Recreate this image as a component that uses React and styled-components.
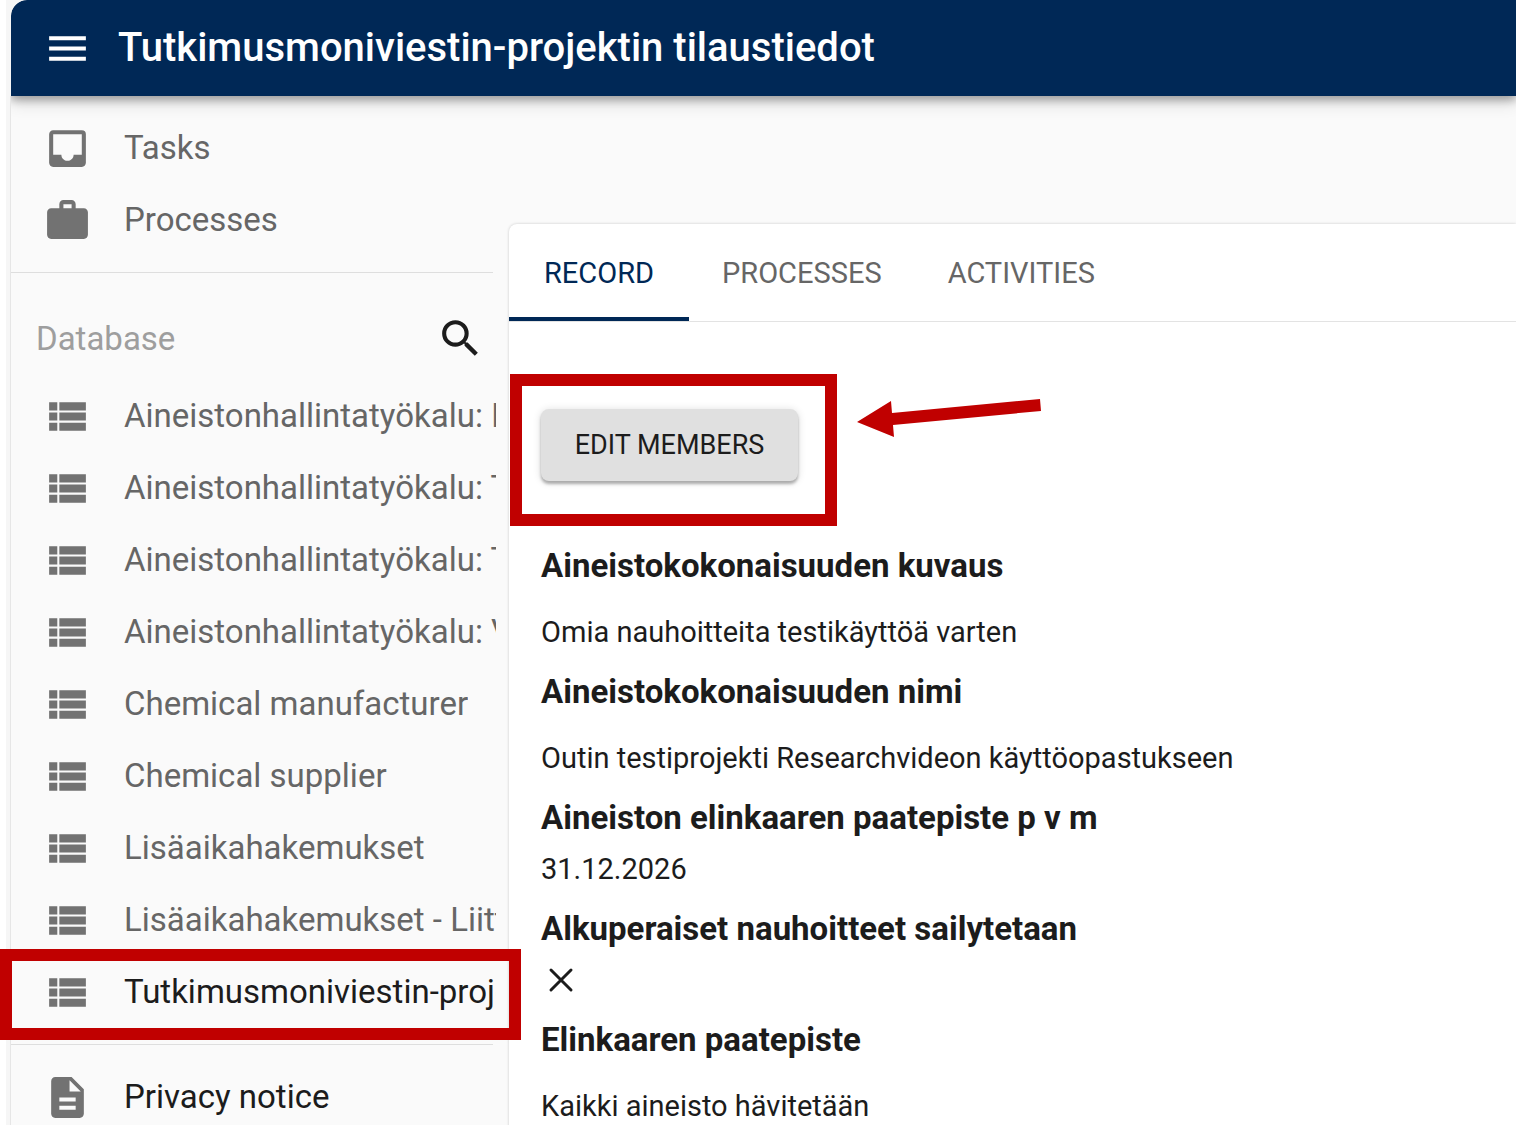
import React from 'react'
import styled, { createGlobalStyle } from 'styled-components'
import { MdMenu, MdInbox, MdWork, MdSearch, MdDescription } from 'react-icons/md'

const databases = [
  'Aineistonhallintatyökalu: IT',
  'Aineistonhallintatyökalu: Tila',
  'Aineistonhallintatyökalu: Tuki',
  'Aineistonhallintatyökalu: Vuo',
  'Chemical manufacturer',
  'Chemical supplier',
  'Lisäaikahakemukset',
  'Lisäaikahakemukset - Liitteet',
  'Tutkimusmoniviestin-projektin'
]

const tabs = ['Record', 'Processes', 'Activities']

const fields = [
  { name: 'Aineistokokonaisuuden kuvaus', value: 'Omia nauhoitteita testikäyttöä varten', rich: true },
  { name: 'Aineistokokonaisuuden nimi', value: 'Outin testiprojekti Researchvideon käyttöopastukseen', rich: true },
  { name: 'Aineiston elinkaaren paatepiste p v m', value: '31.12.2026' },
  { name: 'Alkuperaiset nauhoitteet sailytetaan', value: false },
  { name: 'Elinkaaren paatepiste', value: 'Kaikki aineisto hävitetään', rich: true }
]

function ListIcon() {
  return (
    <svg viewBox="0 0 24 24" fill="currentColor" aria-hidden="true">
      <path d="M3 14h4v-4H3v4zm0 5h4v-4H3v4zM3 9h4V5H3v4zm5 5h13v-4H8v4zm0 5h13v-4H8v4zM8 5v4h13V5H8z" />
    </svg>
  )
}

function CrossIcon() {
  return (
    <svg width="40" height="40" viewBox="0 0 40 40" role="img" aria-label="No">
      <path d="M10 10L30 30M30 10L10 30" stroke="#1c1c1c" strokeWidth="3" strokeLinecap="round" />
    </svg>
  )
}

function App() {
  const [tab, setTab] = React.useState('Record')
  return (
    <Page>
      <GlobalStyle />
      <Frame>
        <Header>
          <IconButton type="button" aria-label="Menu"><MdMenu /></IconButton>
          <Title>Tutkimusmoniviestin-projektin tilaustiedot</Title>
        </Header>
        <Body>
          <Sidebar>
            <NavList>
              <NavItem><NavLink href="#tasks"><MdInbox /><span>Tasks</span></NavLink></NavItem>
              <NavItem><NavLink href="#processes"><MdWork /><span>Processes</span></NavLink></NavItem>
            </NavList>
            <Divider />
            <Subheader>
              <span>Database</span>
              <IconButton type="button" aria-label="Search"><MdSearch /></IconButton>
            </Subheader>
            <DatabaseList>
              {databases.map((name, i) => {
                const current = i === databases.length - 1
                return (
                  <NavItem key={name}>
                    <NavLink href={'#db' + i} $dark={current}><ListIcon /><span>{name}</span></NavLink>
                    {current && <NavMark />}
                  </NavItem>
                )
              })}
            </DatabaseList>
            <Divider />
            <NavList>
              <NavItem><NavLink href="#privacy" $dark><MdDescription /><span>Privacy notice</span></NavLink></NavItem>
            </NavList>
          </Sidebar>
          <Card>
            <Tabs role="tablist">
              {tabs.map((name) => (
                <Tab key={name} type="button" role="tab" aria-selected={tab === name} $active={tab === name} onClick={() => setTab(name)}>
                  {name}
                </Tab>
              ))}
            </Tabs>
            <Record>
              <Actions>
                <EditButton type="button">Edit members</EditButton>
                <ButtonMark />
                <Arrow viewBox="0 0 186 40" aria-hidden="true">
                  <path d="M0 24L34 3L35 15L183 1L184 13L36 27L37 39Z" fill="#c00000" />
                </Arrow>
              </Actions>
              {fields.map((field) => (
                <Field key={field.name}>
                  <h2>{field.name}</h2>
                  <Value $rich={field.rich}>{field.value === false ? <CrossIcon /> : field.value}</Value>
                </Field>
              ))}
            </Record>
          </Card>
        </Body>
      </Frame>
    </Page>
  )
}

export default App

const GlobalStyle = createGlobalStyle`
  * {
    box-sizing: border-box;
  }
  body {
    margin: 0;
    background: #fff;
    font-family: Roboto, "Liberation Sans", sans-serif;
    color: #1c1c1c;
  }
  button {
    font-family: inherit;
    border: 0;
    padding: 0;
    cursor: pointer;
  }
`

const Page = styled.div`
   height: 100vh;
   padding-left: 6px;
   overflow: hidden;
`

const Frame = styled.div`
   display: flex;
   flex-direction: column;
   height: 100%;
   padding-left: 5px;
   background: #f6f6f6;
`

const Header = styled.header`
   position: relative;
   z-index: 3;
   display: flex;
   flex-shrink: 0;
   align-items: center;
   gap: 26px;
   height: 96px;
   padding: 0 32px;
   background: #002856;
   color: #fff;
   border-top-left-radius: 16px;
   box-shadow: 0 4px 8px rgba(0, 0, 0, 0.3), 0 8px 16px rgba(0, 0, 0, 0.12);
   clip-path: inset(0 0 -32px 0 round 16px 0 0 0);
`

const Title = styled.h1`
   margin: 0;
   font-size: 40px;
   line-height: 48px;
   font-weight: 500;
   white-space: nowrap;
`

const IconButton = styled.button`
   display: flex;
   background: none;
   color: inherit;
  svg {
    width: 49px;
    height: 49px;
  }
`

const Body = styled.div`
   display: grid;
   grid-template-columns: 485px 1fr;
   gap: 13px;
   flex: 1;
   min-height: 0;
   background: #fafafa;
   box-shadow: -1px 0 0 #e6e6e6;
`

const Sidebar = styled.nav`
   position: relative;
   z-index: 2;
`

const NavList = styled.ul`
   list-style: none;
   margin: 0;
   padding: 16px 0;
`

const DatabaseList = styled(NavList)`
   padding-top: 0;
`

const NavItem = styled.li`
   position: relative;
   height: 72px;
`

const NavLink = styled.a`
   display: flex;
   align-items: center;
   gap: 32px;
   height: 100%;
   padding-left: 32px;
   color: ${(props) => (props.$dark ? '#1c1c1c' : '#666')};
   text-decoration: none;
   font-size: 33px;
   line-height: 48px;
  svg {
    flex-shrink: 0;
    width: 49px;
    height: 49px;
    color: #727272;
  }
  span {
    overflow: hidden;
    white-space: nowrap;
  }
`

const Divider = styled.hr`
   height: 1px;
   margin: 0 3px 0 0;
   border: 0;
   background: #dedede;
`

const Subheader = styled.div`
   display: flex;
   align-items: center;
   justify-content: space-between;
   height: 83px;
   margin-top: 24px;
   padding: 0 11px 0 25px;
   font-size: 33px;
   line-height: 48px;
  span {
    color: #9e9e9e;
  }
`

const NavMark = styled.div`
   position: absolute;
   inset: -7px -25px -12px -11px;
   border: 12px solid #c00000;
   pointer-events: none;
`

const Card = styled.main`
   position: relative;
   z-index: 1;
   margin-top: 128px;
   min-width: 0;
   background: #fff;
   border-top-left-radius: 8px;
   box-shadow: 0 0 3px rgba(0, 0, 0, 0.2);
`

const Tabs = styled.div`
   display: flex;
   height: 98px;
   border-bottom: 1px solid #e3e3e3;
`

const Tab = styled.button`
   min-width: 180px;
   padding: 4px 33px 0;
   background: none;
   color: ${(props) => (props.$active ? '#002856' : '#666')};
   border-bottom: 4px solid ${(props) => (props.$active ? '#002856' : 'transparent')};
   font-size: 29px;
   text-transform: uppercase;
`

const Record = styled.div`
   padding: 87px 32px 0;
`

const Actions = styled.div`
   position: relative;
   margin-bottom: 61px;
`

const EditButton = styled.button`
   display: block;
   width: 257px;
   height: 72px;
   background: #e0e0e0;
   color: #1c1c1c;
   border-radius: 8px;
   box-shadow: 0 3px 3px rgba(0, 0, 0, 0.28), 0 1px 8px rgba(0, 0, 0, 0.14);
   font-size: 27px;
   text-transform: uppercase;
`

const ButtonMark = styled.div`
   position: absolute;
   top: -35px;
   left: -31px;
   width: 327px;
   height: 152px;
   border: 12px solid #c00000;
   pointer-events: none;
`

const Arrow = styled.svg`
   position: absolute;
   top: -11px;
   left: 316px;
   width: 186px;
   height: 40px;
`

const Field = styled.section`
   margin-bottom: 16px;
  h2 {
    margin: 0;
    font-size: 33px;
    line-height: 48px;
    font-weight: 700;
  }
`

const Value = styled.div`
   margin-top: ${(props) => (props.$rich ? '22px' : '7px')};
   font-size: 29px;
   line-height: 40px;
  svg {
    display: block;
  }
`
